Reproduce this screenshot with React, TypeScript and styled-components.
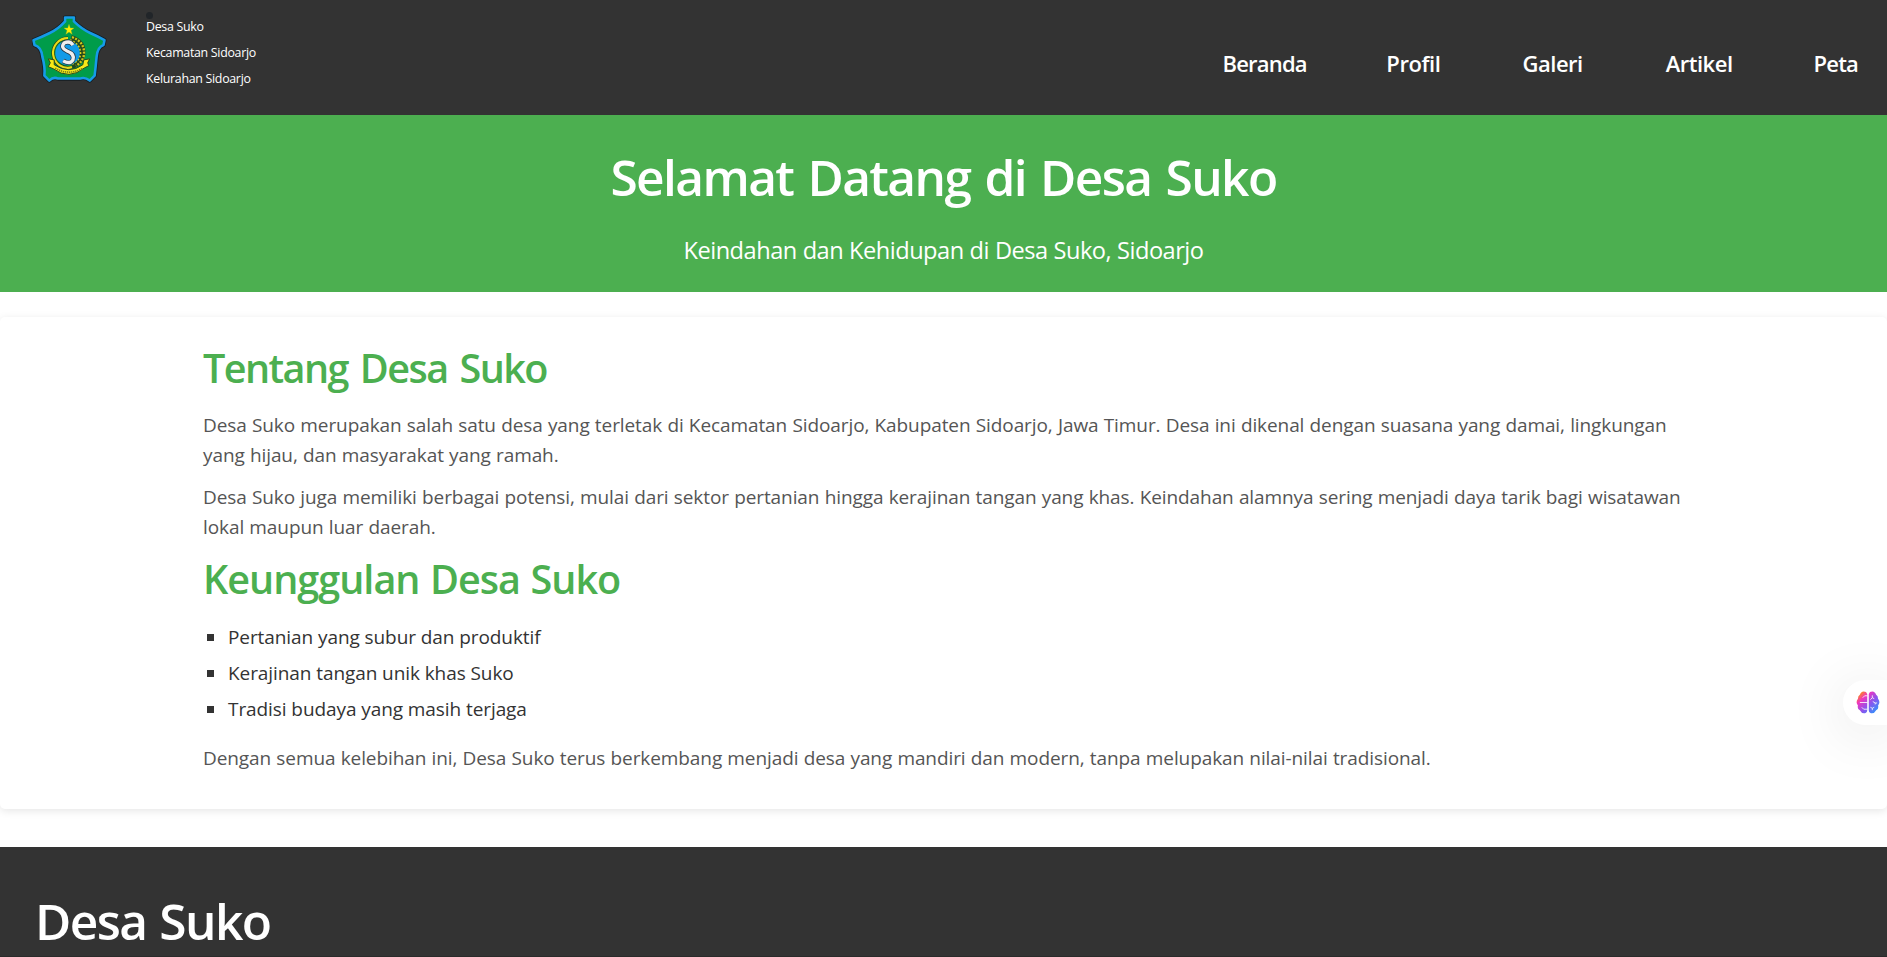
import React from "react";
import styled, { createGlobalStyle } from "styled-components";

const Global = createGlobalStyle`
  * { box-sizing: border-box; }
  html, body { margin: 0; padding: 0; }
  html { overflow: hidden; }
  body {
    height: 957px;
    overflow: hidden;
    background: #fff;
    color: #333;
    font-family: "Open Sans", "Noto Sans", sans-serif;
  }
  h1, h2, p, ul { margin: 0; padding: 0; }
`;

const Page = styled.div`
  height: 957px;
  overflow: hidden;
`;

const Header = styled.header`
  display: flex;
  justify-content: space-between;
  height: 115px;
  padding: 0 29px 0 32px;
  background: #333;
  color: #fff;
`;

const Brand = styled.div`
  display: flex;
  align-items: flex-start;
`;

const Logo = styled.svg`
  width: 75px;
  height: 69px;
  margin-top: 15px;
`;

const Address = styled.ul`
  position: relative;
  margin: 14px 0 0 39px;
  list-style: none;
  &::before {
    content: "";
    position: absolute;
    top: -2px;
    left: 0;
    width: 7px;
    height: 7px;
    border-radius: 50%;
    background: #212529;
  }
`;

const AddressLine = styled.li`
  height: 26px;
  line-height: 26px;
  font-size: 12.4px;
  letter-spacing: -0.3px;
  white-space: nowrap;
`;

const Nav = styled.nav`
  display: flex;
  margin-top: 47px;
`;

const NavLink = styled.a<{ $track: number; $gap: number }>`
  margin-left: ${(p) => p.$gap}px;
  color: #fff;
  font-size: 22px;
  font-weight: 600;
  line-height: 33px;
  letter-spacing: ${(p) => p.$track}px;
`;

const Hero = styled.section`
  display: flex;
  flex-direction: column;
  align-items: center;
  height: 177px;
  padding-top: 32px;
  background: #4caf50;
  color: #fff;
`;

const HeroTitle = styled.h1`
  font-size: 49.6px;
  font-weight: 600;
  line-height: 60px;
  letter-spacing: -1.6px;
  word-spacing: 2.8px;
  white-space: nowrap;
`;

const HeroText = styled.p`
  margin-top: 25px;
  font-size: 23.6px;
  line-height: 36px;
  letter-spacing: -0.5px;
  word-spacing: 0.3px;
  white-space: nowrap;
`;

const Content = styled.main`
  height: 492px;
  margin: 25px 0 38px;
  padding: 27px 203px 0;
  border-radius: 5px;
  box-shadow: 0 2px 8px rgba(0, 0, 0, 0.1);
`;

const Heading = styled.h2<{ $top?: number; $track: number; $words: number }>`
  margin-top: ${(p) => p.$top ?? 0}px;
  color: #4caf50;
  font-size: 39.6px;
  font-weight: 600;
  line-height: 48px;
  letter-spacing: ${(p) => p.$track}px;
  word-spacing: ${(p) => p.$words}px;
`;

const Paragraph = styled.p<{ $top: number }>`
  margin-top: ${(p) => p.$top}px;
  color: #555;
  font-size: 19px;
  line-height: 30px;
  letter-spacing: -0.09px;
  word-spacing: 0.4px;
  white-space: nowrap;
`;

const List = styled.ul`
  display: flex;
  flex-direction: column;
  gap: 6px;
  margin: 19px 0 0;
  list-style: none;
`;

const Item = styled.li`
  display: flex;
  align-items: center;
  gap: 14px;
  padding-left: 4px;
  font-size: 19px;
  line-height: 30px;
  letter-spacing: -0.08px;
  &::before {
    content: "";
    width: 7px;
    height: 7px;
    background: #333;
  }
`;

const Footer = styled.footer`
  height: 110px;
  padding: 44px 35px 0;
  border-bottom: 1px solid #2a2a2a;
  background: #333;
  color: #fff;
`;

const FooterTitle = styled.h2`
  font-size: 49.6px;
  font-weight: 600;
  line-height: 60px;
  letter-spacing: -1.6px;
  word-spacing: 1.6px;
`;

const Assistant = styled.button`
  position: fixed;
  top: 680px;
  right: 0;
  display: flex;
  align-items: center;
  width: 44px;
  height: 45px;
  padding: 0 0 0 13px;
  border: 0;
  border-radius: 23px 0 0 23px;
  background: #fff;
  box-shadow: 0 8px 60px rgba(0, 0, 0, 0.13);
`;

const SHIELD =
  "M33 2H42V6Q50 14 59 18Q66 21 73 25L72 30Q66 32 65 42Q64 53 63 61L58 66Q53 62 48 64H26Q21 62 17 66L12 61Q13 53 10 42Q9 32 2 30L1 25Q9 22 17 18Q26 14 33 6Z";

function Emblem() {
  return (
    <Logo viewBox="-.5 -.5 76 70">
      <path d={SHIELD} fill="#009c4a" stroke="#151c22" strokeWidth="4.2" strokeLinejoin="round" />
      <path d={SHIELD} fill="#009c4a" stroke="#169be8" strokeWidth="2.6" strokeLinejoin="round" />
      <path d="M37 9L38.3 12.8H42L39 15.2L40.2 19L37 16.8L33.8 19L35 15.2L32 12.8H35.7Z" fill="#fff100" stroke="#a9b51b" strokeWidth=".4" />
      <path d="M36 23A15 15 0 1 0 40 52.4" fill="none" stroke="#23451c" strokeWidth="3.6" />
      <path d="M36 23A15 15 0 1 0 40 52.4" fill="none" stroke="#e9dc18" strokeWidth="2.2" />
      <path d="M39 23Q52 27 50.5 40Q48 49 40 51" fill="none" stroke="#24471d" strokeWidth="6" />
      <path d="M40 22Q54 27 52 41Q50 48 44 51" fill="none" stroke="#cfc51b" strokeWidth="2.4" strokeDasharray="2 1.4" />
      <path d="M38 25Q49 29 48.5 40Q46 47 40 49" fill="none" stroke="#dfd51b" strokeWidth="2" strokeDasharray="1.8 1.6" />
      <circle cx="35.5" cy="38" r="12.4" fill="#129be8" />
      <path d="M41 30Q38 25 32 28Q28 33 35 36Q43 39 41 45Q38 50 31 46" fill="none" stroke="#253744" strokeWidth="4.8" />
      <path d="M41 30Q38 25 32 28Q28 33 35 36Q43 39 41 45Q38 50 31 46" fill="none" stroke="#eee" strokeWidth="3.4" />
      <path d="M16 44L22 45L22 50Q37 60 51 50L52 45L58 44L56 48L57 51L53 53Q37 66 21 54L16 52L18 48Z" fill="#f7e817" stroke="#29491b" strokeWidth="1" />
      <path d="M23 53.5Q37 61.5 51 53.5" fill="none" stroke="#7a7d1c" strokeWidth="1.6" strokeDasharray="1.3 .8" />
    </Logo>
  );
}

function Brain() {
  return (
    <svg width="24" height="23" viewBox="0 0 25 24">
      <defs>
        <linearGradient id="brain" x1="0" y1="0" x2="1" y2="1">
          <stop offset=".08" stopColor="#ff9500" />
          <stop offset=".3" stopColor="#ef35c0" />
          <stop offset=".58" stopColor="#8b55ee" />
          <stop offset="1" stopColor="#16a6ff" />
        </linearGradient>
      </defs>
      <path d="M11.7 3Q11 .5 8 .5Q5 .7 4 4Q2 5 2 8Q-.8 12 2 15Q1 19 4 20Q6 24 10 23Q11.7 22 11.7 20ZM13.3 3Q14 .5 17 .5Q20 .7 21 4Q23 5 23 8Q25.8 12 23 15Q24 19 21 20Q19 24 15 23Q13.3 22 13.3 20Z" fill="url(#brain)" />
      <path d="M12 5H9L7 7M12 12H4M12 19H8L6 17M17 4.5V7L15 9M17 7L19 8M17.5 11L20 12.5H22M20 12.5V14M15 17L17 18L19 17M17 18V20" fill="none" stroke="#fff" strokeWidth="1" opacity=".85" />
    </svg>
  );
}

export default function App() {
  return (
    <Page>
      <Global />
      <Header>
        <Brand>
          <Emblem />
          <Address>
            <AddressLine>Desa Suko</AddressLine>
            <AddressLine>Kecamatan Sidoarjo</AddressLine>
            <AddressLine>Kelurahan Sidoarjo</AddressLine>
          </Address>
        </Brand>
        <Nav>
          <NavLink $gap={0} $track={-0.8}>Beranda</NavLink>
          <NavLink $gap={79.5} $track={-0.4}>Profil</NavLink>
          <NavLink $gap={82} $track={-0.5}>Galeri</NavLink>
          <NavLink $gap={83} $track={-0.5}>Artikel</NavLink>
          <NavLink $gap={81} $track={-0.8}>Peta</NavLink>
        </Nav>
      </Header>
      <Hero>
        <HeroTitle>Selamat Datang di Desa Suko</HeroTitle>
        <HeroText>Keindahan dan Kehidupan di Desa Suko, Sidoarjo</HeroText>
      </Hero>
      <Content>
        <Heading $track={-1.6} $words={3.4}>Tentang Desa Suko</Heading>
        <Paragraph $top={18}>
          Desa Suko merupakan salah satu desa yang terletak di Kecamatan Sidoarjo, Kabupaten Sidoarjo, Jawa Timur. Desa ini dikenal dengan suasana yang damai, lingkungan
          <br />
          yang hijau, dan masyarakat yang ramah.
        </Paragraph>
        <Paragraph $top={12}>
          Desa Suko juga memiliki berbagai potensi, mulai dari sektor pertanian hingga kerajinan tangan yang khas. Keindahan alamnya sering menjadi daya tarik bagi wisatawan
          <br />
          lokal maupun luar daerah.
        </Paragraph>
        <Heading $top={13} $track={-1} $words={1.2}>Keunggulan Desa Suko</Heading>
        <List>
          <Item>Pertanian yang subur dan produktif</Item>
          <Item>Kerajinan tangan unik khas Suko</Item>
          <Item>Tradisi budaya yang masih terjaga</Item>
        </List>
        <Paragraph $top={19}>
          Dengan semua kelebihan ini, Desa Suko terus berkembang menjadi desa yang mandiri dan modern, tanpa melupakan nilai-nilai tradisional.
        </Paragraph>
      </Content>
      <Footer>
        <FooterTitle>Desa Suko</FooterTitle>
      </Footer>
      <Assistant aria-label="Asisten">
        <Brain />
      </Assistant>
    </Page>
  );
}
